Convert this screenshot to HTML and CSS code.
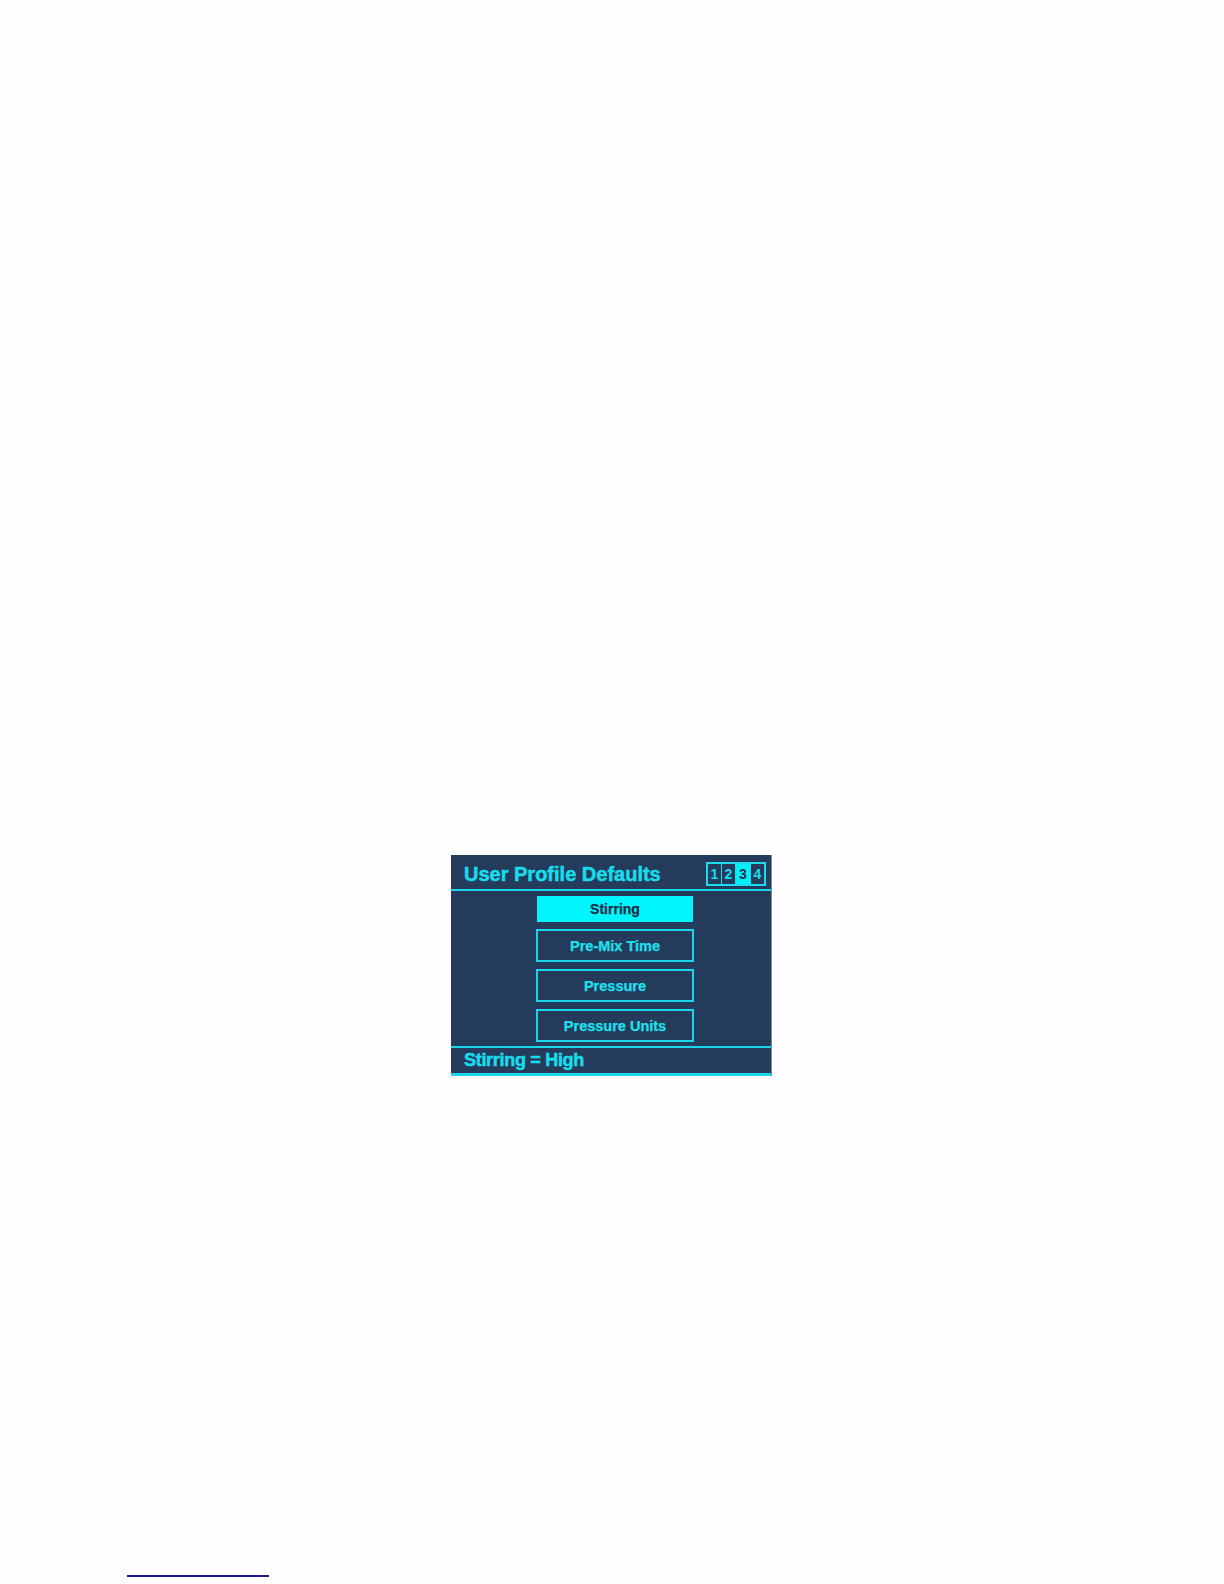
FILE: index.html
```html
<!DOCTYPE html>
<html>
<head>
<meta charset="utf-8">
<link rel="stylesheet" href="styles.css">
</head>
<body>
<div class="page">
  <div class="screen">
    <div class="header">
      <div class="title">User Profile Defaults</div>
      <div class="pages">
        <span class="pg">1</span><span class="pg">2</span><span class="pg active">3</span><span class="pg">4</span>
      </div>
    </div>
    <div class="rule"></div>
    <div class="menu">
      <div class="btn selected">Stirring</div>
      <div class="btn">Pre-Mix Time</div>
      <div class="btn">Pressure</div>
      <div class="btn">Pressure Units</div>
    </div>
    <div class="rule"></div>
    <div class="status">Stirring = High</div>
    <div class="rule bottom"></div>
  </div>
  <div class="footnote-line"></div>
</div>
</body>
</html>
```
FILE: styles.css
```css
html, body {
  margin: 0;
  padding: 0;
  background: #fefefe;
}
.page {
  padding-top: 855px;
  height: 1584px;
  box-sizing: border-box;
}
.screen {
  margin-left: 451px;
  width: 321px;
  background: #243b5b;
  border-right: 1px solid #7c8a9a;
  box-sizing: border-box;
  font-family: "Liberation Sans", Arial, sans-serif;
  font-weight: bold;
}
.header {
  height: 34px;
  display: flex;
  align-items: flex-start;
  justify-content: space-between;
  padding: 0 5px 0 13px;
}
.title {
  color: #18dcec;
  font-size: 20px;
  line-height: 20px;
  margin-top: 9px;
  -webkit-text-stroke: 0.5px #18dcec;
}
.pages {
  display: flex;
  margin-top: 7px;
  border: 2px solid #18dcec;
}
.pg {
  width: 14px;
  height: 20px;
  box-sizing: border-box;
  border-left: 1px solid #18dcec;
  color: #18dcec;
  font-size: 14px;
  line-height: 20px;
  text-align: center;
}
.pg:first-child { border-left: none; width: 13px; }
.pg.active {
  background: #00f0fa;
  color: #1e3050;
  width: 15px;
}
.rule {
  height: 2px;
  background: #1ad6e8;
}
.rule.bottom {
  height: 3px;
}
.menu {
  display: flex;
  flex-direction: column;
  align-items: flex-start;
  padding: 5px 0 4px 85px;
  gap: 7px;
}
.btn {
  width: 158px;
  height: 33px;
  box-sizing: border-box;
  border: 2px solid #1ad6e8;
  color: #1ee0ee;
  font-size: 14.5px;
  display: flex;
  align-items: center;
  justify-content: center;
  -webkit-text-stroke: 0.25px #1ee0ee;
}
.btn.selected {
  width: 156px;
  height: 26px;
  margin-left: 1px;
  border: none;
  background: #00f4fc;
  color: #1e2e48;
  font-size: 14px;
  -webkit-text-stroke: 0.25px #1e2e48;
}
.status {
  height: 25px;
  padding-left: 13px;
  color: #18dcec;
  font-size: 18px;
  line-height: 25px;
  letter-spacing: -0.3px;
  -webkit-text-stroke: 0.5px #18dcec;
}
.footnote-line {
  margin-top: 499px;
  margin-left: 127px;
  width: 142px;
  height: 2px;
  background: #1a1a8a;
}
```
